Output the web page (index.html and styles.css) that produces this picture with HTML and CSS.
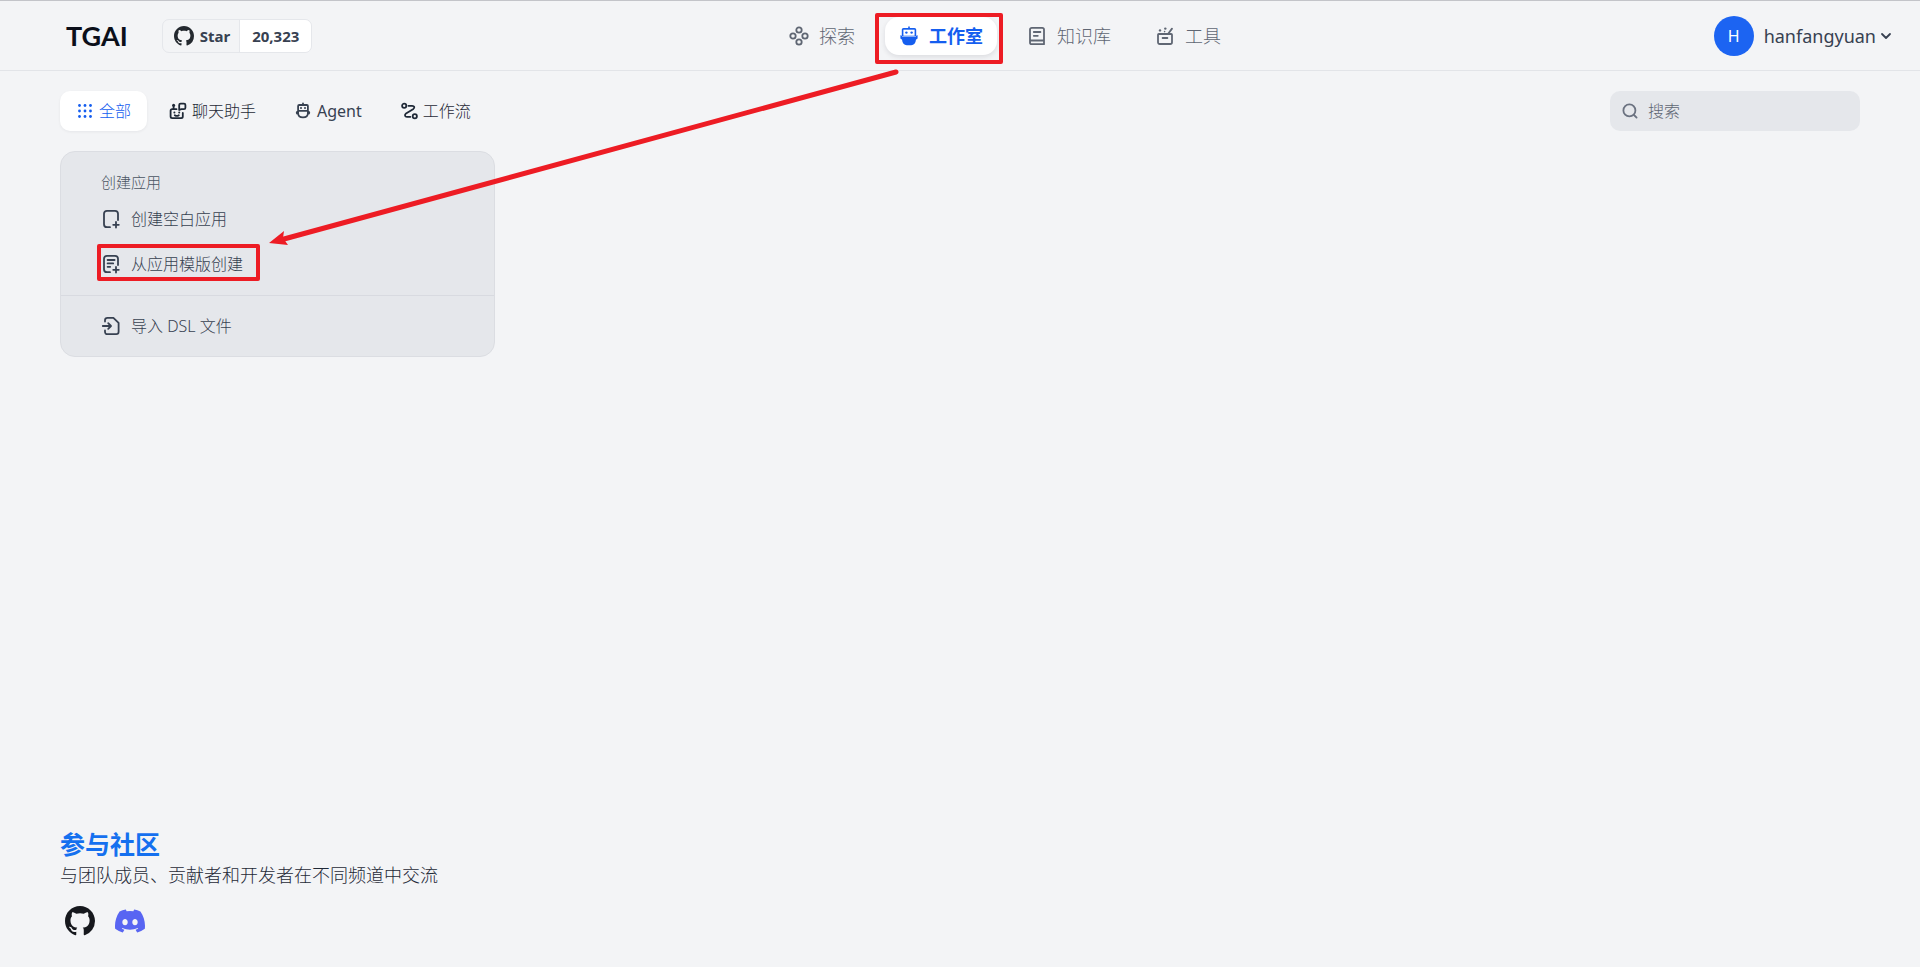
FILE: index.html
```html
<!DOCTYPE html>
<html lang="zh-CN">
<head>
<meta charset="utf-8">
<meta name="viewport" content="width=device-width, initial-scale=1">
<title>TGAI 工作室</title>
<link rel="stylesheet" href="styles.css">
</head>
<body>
<svg class="defs" width="0" height="0" aria-hidden="true">
  <symbol id="github" viewBox="0 0 16 16"><path fill="currentColor" d="M8 0C3.58 0 0 3.58 0 8c0 3.54 2.29 6.53 5.47 7.59.4.07.55-.17.55-.38 0-.19-.01-.82-.01-1.49-2.01.37-2.53-.49-2.69-.94-.09-.23-.48-.94-.82-1.13-.28-.15-.68-.52-.01-.53.63-.01 1.08.58 1.23.82.72 1.21 1.87.87 2.33.66.07-.52.28-.87.51-1.07-1.78-.2-3.64-.89-3.64-3.95 0-.87.31-1.59.82-2.15-.08-.2-.36-1.02.08-2.12 0 0 .67-.21 2.2.82.64-.18 1.32-.27 2-.27s1.36.09 2 .27c1.53-1.04 2.2-.82 2.2-.82.44 1.1.16 1.92.08 2.12.51.56.82 1.27.82 2.15 0 3.07-1.87 3.75-3.65 3.95.29.25.54.73.54 1.48 0 1.07-.01 1.93-.01 2.2 0 .21.15.46.55.38A8.01 8.01 0 0 0 16 8c0-4.42-3.58-8-8-8z"/></symbol>
</svg>

<header class="header">
  <div class="brand">
    <a class="logo" href="#">TGAI</a>
    <a class="star" href="#">
      <span class="star-label"><svg class="star-icon" aria-hidden="true"><use href="#github"/></svg>Star</span>
      <span class="star-count">20,323</span>
    </a>
  </div>
  <nav class="nav">
    <a class="nav-item" href="#">
      <svg class="icon-lg" viewBox="0 0 20 20" aria-hidden="true"><g class="stroke"><circle cx="10" cy="4" r="2.7"/><circle cx="10" cy="16" r="2.7"/><circle cx="4" cy="10" r="2.7"/><circle cx="16" cy="10" r="2.7"/></g></svg>探索</a>
    <a class="nav-item nav-active" href="#" aria-current="page">
      <svg class="icon-lg" viewBox="0 0 20 20" aria-hidden="true"><path d="M9.200 .5h1.600v1.500h4.600c1.100 0 1.800.7 1.800 1.800v6.200H2.800V3.800C2.800 2.700 3.500 2 4.600 2h4.600z" fill="currentColor"/><path d="M4.400 3.700h11.200v6H4.400z" fill="#fff"/><circle cx="7.400" cy="6.600" r="1.200" fill="currentColor"/><circle cx="12.600" cy="6.600" r="1.200" fill="currentColor"/><path d="M1.400 9.200c.9 0 1.500.4 1.800 1.200h13.600c.3-.8.900-1.200 1.800-1.200v2.600c0 1-.6 1.600-1.600 1.800-.4 3.600-2 5.600-4.800 5.600H7.800c-2.800 0-4.400-2-4.800-5.600-1-.2-1.600-.8-1.600-1.800z" fill="currentColor"/></svg>工作室</a>
    <a class="nav-item" href="#">
      <svg class="icon-lg" viewBox="0 0 20 20" aria-hidden="true"><g class="stroke"><path d="M17 14.500V3.600c0-1.100-.7-1.800-1.800-1.800H4.800C3.700 1.800 3 2.500 3 3.600v12.800c0 1.100.7 1.800 1.800 1.800H17v-3.700H3.200M6.800 6h6.600M6.800 9.800h4"/></g></svg>知识库</a>
    <a class="nav-item" href="#">
      <svg class="icon-lg" viewBox="0 0 20 20" aria-hidden="true"><g class="stroke"><path d="M13 8h3.200c.5 0 .8.300.8.800v7.400c0 1.100-.7 1.800-1.800 1.800H4.800C3.700 18 3 17.300 3 16.200V8.800c0-.5.300-.8.800-.8H13l4-5.400M7.600 12h4.800"/></g><g fill="currentColor"><circle cx="5" cy="4.400" r="1.200"/><circle cx="10.300" cy="2.600" r="1.200"/><circle cx="9.600" cy="5.600" r=".8"/></g></svg>工具</a>
  </nav>
  <button class="account" type="button">
    <span class="avatar">H</span>
    <span class="account-name">hanfangyuan</span>
    <svg class="chevron" viewBox="0 0 12 12" aria-hidden="true"><path class="stroke" d="M2 4l4 4 4-4"/></svg>
  </button>
</header>

<main class="main">
  <div class="toolbar">
    <div class="tabs">
      <button class="tab tab-active" type="button">
        <svg class="icon-md" viewBox="0 0 18 18" aria-hidden="true"><g fill="currentColor"><circle cx="3.500" cy="3.500" r="1.400"/><circle cx="9" cy="3.500" r="1.400"/><circle cx="14.500" cy="3.500" r="1.400"/><circle cx="3.500" cy="9" r="1.400"/><circle cx="9" cy="9" r="1.400"/><circle cx="14.500" cy="9" r="1.400"/><circle cx="3.500" cy="14.500" r="1.400"/><circle cx="9" cy="14.500" r="1.400"/><circle cx="14.500" cy="14.500" r="1.400"/></g></svg>全部</button>
      <button class="tab" type="button">
        <svg class="icon-md" viewBox="0 0 18 18" aria-hidden="true"><g class="stroke"><path d="M7.500 7.200H3.200c-1 0-1.600.6-1.600 1.600v5.800c0 1 .6 1.600 1.600 1.600h9c1 0 1.600-.6 1.600-1.600V11M4.600 7V3.600M10.200 8V3c0-.9.500-1.400 1.400-1.400h3.400c.9 0 1.400.5 1.400 1.400v2.800c0 .9-.5 1.400-1.400 1.400h-2.600zM5.800 13.200c1.200.9 2.800.9 4 0"/></g><g fill="currentColor"><circle cx="4.600" cy="3.200" r="1.500"/><circle cx="5.400" cy="10.600" r="1"/><circle cx="10.200" cy="10.600" r="1"/></g></svg>聊天助手</button>
      <button class="tab tab-latin" type="button">
        <svg class="icon-md" viewBox="0 0 18 18" aria-hidden="true"><g class="stroke"><path d="M9 1.400V3M5.200 3h7.600c.7 0 1.100.4 1.100 1.100v4.700H4.100V4.100C4.100 3.400 4.500 3 5.200 3zM4.100 8.800v2.400c0 2.600 1.700 4.200 4.900 4.200s4.900-1.600 4.900-4.200V8.800M4 9.600c-.9 0-1.300.4-1.300 1.100s.5 1.100 1.400 1.100M14 9.600c.9 0 1.300.4 1.300 1.100s-.5 1.100-1.400 1.100"/></g><g fill="currentColor"><circle cx="7" cy="6" r="1"/><circle cx="11" cy="6" r="1"/></g></svg>Agent</button>
      <button class="tab" type="button">
        <svg class="icon-md" viewBox="0 0 18 18" aria-hidden="true"><g class="stroke"><circle cx="4.200" cy="3.800" r="2.100"/><circle cx="14.800" cy="14.200" r="2.100"/><path d="M8.400 3.800h3.800c2.200 0 2.800 1.900 1.200 3.100L6 11.600c-1.700 1.200-1.100 3.200.9 3.200h3.500"/></g></svg>工作流</button>
    </div>
    <label class="search">
      <svg class="icon-sm" viewBox="0 0 16 16" aria-hidden="true"><g class="stroke"><circle cx="7.400" cy="7.400" r="6"/><path d="M12 12l2.600 2.600"/></g></svg>
      <input class="search-input" type="text" placeholder="搜索" aria-label="搜索">
    </label>
  </div>

  <div class="cards">
    <section class="card">
      <div class="card-body">
        <h2 class="card-title">创建应用</h2>
        <button class="action" type="button">
          <svg class="icon-lg" viewBox="0 0 20 20" aria-hidden="true"><g class="stroke"><path d="M9 18.200H6c-1.900 0-3-1.100-3-3V4.800c0-1.900 1.100-3 3-3h8c1.900 0 3 1.100 3 3V11M15 13v5.600M12.200 15.800h5.600"/></g></svg>创建空白应用</button>
        <button class="action" type="button">
          <svg class="icon-lg" viewBox="0 0 20 20" aria-hidden="true"><g class="stroke"><path d="M9 18.200H6c-1.900 0-3-1.100-3-3V4.800c0-1.900 1.100-3 3-3h8c1.900 0 3 1.100 3 3V11M15 13v5.600M12.200 15.800h5.600M6.600 6h7M6.600 9.400h5.600M6.600 12.800h2.600"/></g></svg>从应用模版创建</button>
      </div>
      <div class="card-foot">
        <button class="action" type="button">
          <svg class="icon-lg" viewBox="0 0 20 20" aria-hidden="true"><g class="stroke"><path d="M4 5.600V4.200c0-1.500.9-2.400 2.400-2.400h6l5.200 5v9c0 1.500-.9 2.400-2.400 2.400H6.400C4.900 18.200 4 17.300 4 15.800v-1.400M1.800 10h8M7.200 7.200L10 10l-2.800 2.800"/></g></svg>导入 DSL 文件</button>
      </div>
    </section>
  </div>
</main>

<footer class="footer">
  <h2 class="footer-title">参与社区</h2>
  <p class="footer-text">与团队成员、贡献者和开发者在不同频道中交流</p>
  <div class="social">
    <a class="social-link" href="#" aria-label="GitHub"><svg class="social-icon" aria-hidden="true"><use href="#github"/></svg></a>
    <a class="social-link discord" href="#" aria-label="Discord"><svg class="social-icon" viewBox="0 0 24 24" aria-hidden="true"><path fill="currentColor" d="M20.317 4.370a19.791 19.791 0 0 0-4.885-1.515.074.074 0 0 0-.079.037c-.21.375-.444.864-.608 1.250a18.270 18.270 0 0 0-5.487 0 12.640 12.640 0 0 0-.617-1.250.077.077 0 0 0-.079-.037A19.736 19.736 0 0 0 3.677 4.370a.070.070 0 0 0-.032.027C.533 9.046-.32 13.580.099 18.057a.082.082 0 0 0 .031.057 19.900 19.900 0 0 0 5.993 3.030.078.078 0 0 0 .084-.028c.462-.63.874-1.295 1.226-1.994a.076.076 0 0 0-.041-.106 13.107 13.107 0 0 1-1.872-.892.077.077 0 0 1-.008-.128c.126-.094.252-.192.372-.291a.074.074 0 0 1 .077-.010c3.928 1.793 8.180 1.793 12.062 0a.074.074 0 0 1 .078.009c.12.099.246.198.373.292a.077.077 0 0 1-.006.127 12.299 12.299 0 0 1-1.873.892.077.077 0 0 0-.041.107c.36.698.772 1.362 1.225 1.993a.076.076 0 0 0 .084.028 19.839 19.839 0 0 0 6.002-3.030.077.077 0 0 0 .032-.054c.5-5.177-.838-9.674-3.549-13.660a.061.061 0 0 0-.031-.030zM8.020 15.330c-1.183 0-2.157-1.085-2.157-2.419s.956-2.419 2.157-2.419c1.210 0 2.176 1.096 2.157 2.420 0 1.333-.956 2.418-2.157 2.418zm7.975 0c-1.183 0-2.157-1.085-2.157-2.419s.955-2.419 2.157-2.419c1.210 0 2.176 1.096 2.157 2.420 0 1.333-.946 2.418-2.157 2.418z"/></svg></a>
  </div>
</footer>

<svg class="annotation" width="1100" height="320" viewBox="0 0 1100 320" aria-hidden="true">
  <g fill="none" stroke="#ed1c24" stroke-width="4" stroke-linejoin="round">
    <rect x="877" y="15" width="124" height="47"/>
    <rect x="99" y="246" width="159" height="33"/>
    <path d="M896 72L284 239" stroke-width="5" stroke-linecap="round"/>
  </g>
  <path d="M269 243L284 231L283 238L288 245z" fill="#ed1c24"/>
</svg>
</body>
</html>
```
FILE: styles.css
```css
* { box-sizing: border-box; }

body {
  margin: 0;
  min-height: 100vh;
  display: flex;
  flex-direction: column;
  position: relative;
  background: #f3f4f6;
  border-top: 1px solid #c3c4c9;
  color: #374151;
  font-family: "Noto Sans", "Noto Sans CJK SC", sans-serif;
  font-size: 16px;
  line-height: 24px;
}

a { color: inherit; text-decoration: none; }
button { border: 0; background: none; color: inherit; font: inherit; padding: 0; cursor: pointer; }
h2, p { margin: 0; }
svg { flex: none; display: block; }

.defs { position: absolute; }

.stroke {
  fill: none;
  stroke: currentColor;
  stroke-width: 1.8;
  stroke-linecap: round;
  stroke-linejoin: round;
}

.icon-sm { width: 16px; height: 16px; }
.icon-md { width: 18px; height: 18px; }
.icon-lg { width: 20px; height: 20px; }

.header {
  display: flex;
  align-items: center;
  justify-content: space-between;
  height: 70px;
  padding: 0 28px 0 66px;
  border-bottom: 1px solid #e2e4e8;
}

.brand { display: flex; align-items: center; gap: 34px; }

.logo {
  font-family: Lato, sans-serif;
  font-size: 27px;
  font-weight: 700;
  color: #0b0f1a;
}

.star {
  display: flex;
  height: 34px;
  border: 1px solid #e5e7eb;
  border-radius: 7px;
  overflow: hidden;
  font-size: 15px;
  font-weight: 700;
}

.star-label {
  display: flex;
  align-items: center;
  gap: 6px;
  padding: 0 9px 0 11px;
  border-right: 1px solid #e5e7eb;
}

.star-icon { width: 20px; height: 20px; color: #24292f; }

.star-count { display: flex; align-items: center; padding: 0 12px; background: #fff; }

.nav { display: flex; gap: 16px; margin-right: 16px; }

.nav-item {
  display: flex;
  align-items: center;
  gap: 10px;
  height: 38px;
  padding: 0 14px;
  border-radius: 14px;
  font-size: 18px;
  font-weight: 300;
  color: #5f6673;
}

.nav-active {
  background: #fff;
  color: #155eef;
  font-weight: 700;
  box-shadow: 0 2px 5px rgba(16, 24, 40, 0.1);
}

.account { display: flex; align-items: center; gap: 10px; font-size: 18px; }

.avatar {
  display: grid;
  place-items: center;
  width: 40px;
  height: 40px;
  border-radius: 50%;
  background: #1c64f2;
  color: #fff;
  font-size: 16px;
}

.chevron { width: 12px; height: 12px; margin-left: -6px; }

.main { flex: 1; padding: 20px 60px; }

.toolbar { display: flex; justify-content: space-between; align-items: center; }

.tabs { display: flex; gap: 6px; }

.tab {
  display: flex;
  align-items: center;
  gap: 5px;
  height: 40px;
  padding: 0 16px;
  border-radius: 10px;
  color: #1f2937;
  font-weight: 300;
}

.tab-latin { font-weight: 400; color: #374151; }

.tab-active {
  background: #fff;
  color: #155eef;
  box-shadow: 0 1px 3px rgba(16, 24, 40, 0.06);
}

.search {
  display: flex;
  align-items: center;
  gap: 10px;
  width: 250px;
  height: 40px;
  padding: 0 12px;
  border-radius: 10px;
  background: #e5e7eb;
  color: #6b7280;
}

.search-input {
  flex: 1;
  min-width: 0;
  padding: 0;
  border: 0;
  outline: 0;
  background: transparent;
  color: inherit;
  font: inherit;
  font-weight: 300;
}

.search-input::placeholder { color: #5f6673; opacity: 1; }

.cards {
  display: grid;
  grid-template-columns: repeat(auto-fill, minmax(400px, 1fr));
  gap: 20px;
  margin-top: 20px;
}

.card {
  border: 1px solid #dbdde2;
  border-radius: 15px;
  background: #e5e7eb;
  color: #374151;
  font-weight: 300;
}

.card-body { padding: 18px 40px 9px; }

.card-title { font-size: 15px; font-weight: 300; line-height: 24px; color: #4b5563; }

.action {
  display: flex;
  align-items: center;
  gap: 10px;
  width: 100%;
  height: 45px;
}

.card-title + .action { margin-top: 2px; }

.card-foot { padding: 7px 40px 8px; border-top: 1px solid #d8dae0; }

.footer { padding: 0 60px 26px; }

.footer-title { font-size: 25px; font-weight: 700; line-height: 36px; color: #1570ef; }

.footer-text { font-size: 18px; line-height: 26px; font-weight: 300; color: #1f2937; }

.social { display: flex; gap: 10px; margin-top: 13px; }

.social-link { display: grid; place-items: center; width: 40px; height: 40px; color: #16181d; }

.discord { color: #5865f2; }

.social-icon { width: 30px; height: 30px; }

.annotation { position: absolute; top: -1px; left: 0; pointer-events: none; }
```
